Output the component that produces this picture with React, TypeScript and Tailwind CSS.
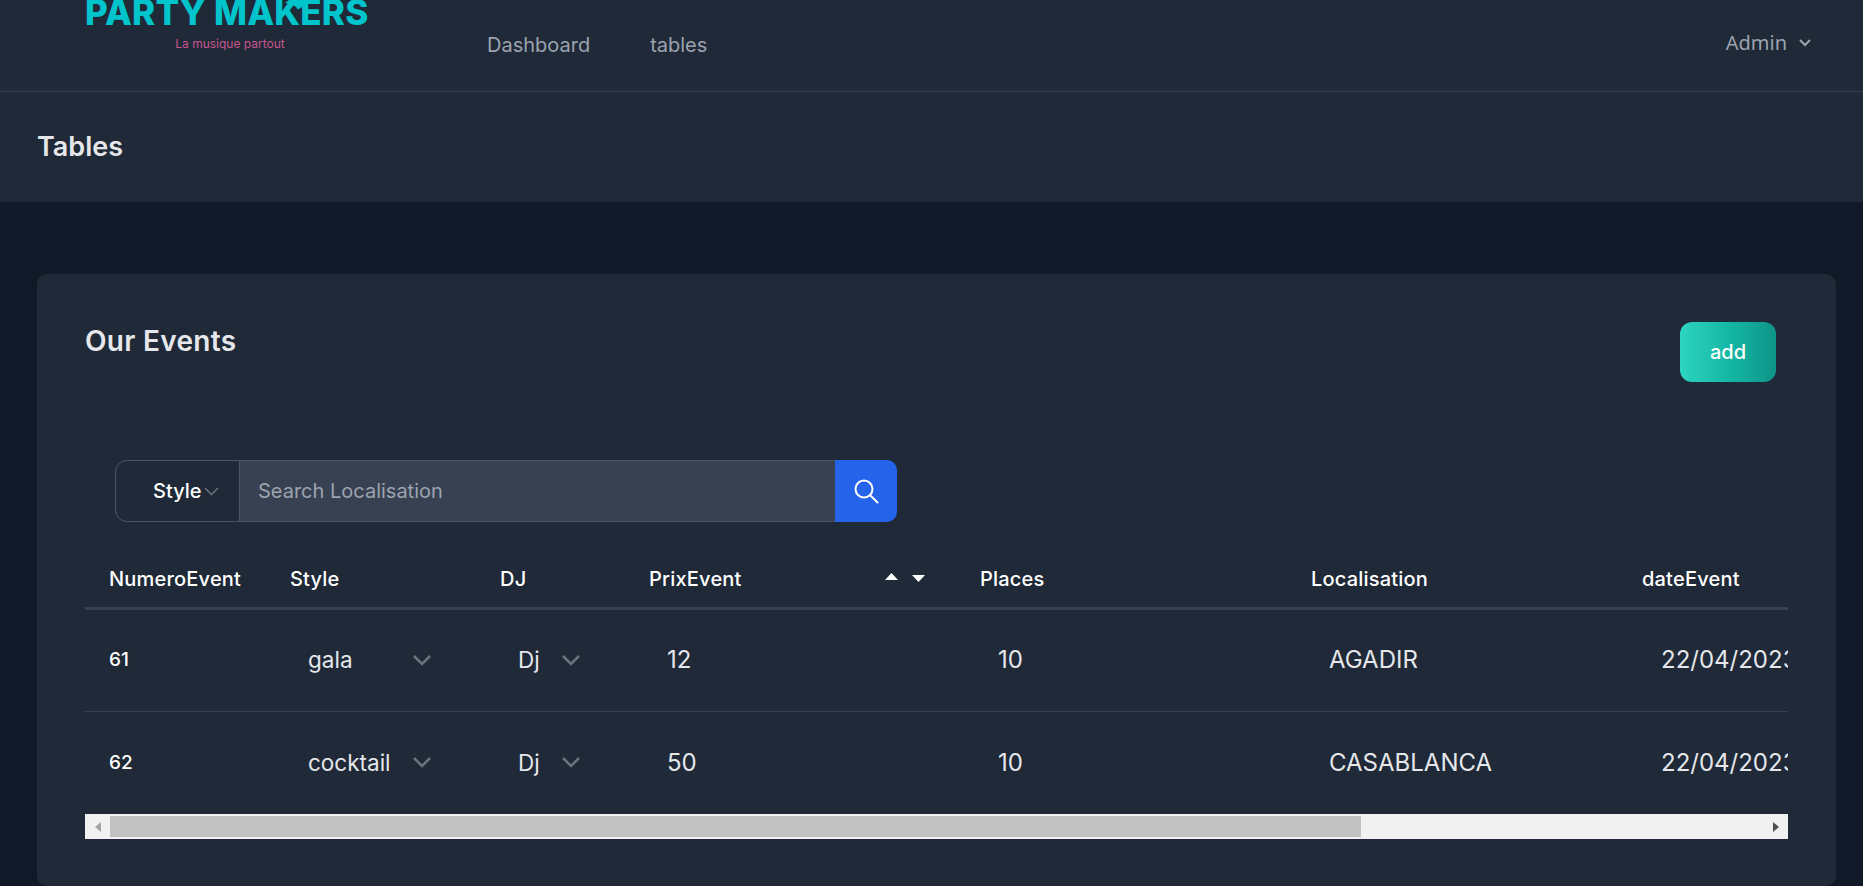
const rows = [
  { id: "61", style: "gala", prix: "12", places: "10", ville: "AGADIR", date: "22/04/2023" },
  { id: "62", style: "cocktail", prix: "50", places: "10", ville: "CASABLANCA", date: "22/04/2023" },
];

const CellChevron = () => (
  <svg width="18" height="11" viewBox="0 0 18 11" fill="none" stroke="#6b7280" strokeWidth="2.5">
    <path d="M1 1l8 8 8-8" />
  </svg>
);

const App = () => {
  return (
    <div className="h-[886px] overflow-hidden bg-[#111827] font-['Inter',sans-serif]">
      <header className="flex h-[92px] overflow-hidden border-b border-[#374151] bg-[#1f2937] pl-[85px] pr-[52px]">
        <div className="relative w-[282px] shrink-0">
          <div className="-mt-[10px] whitespace-nowrap text-[35px] leading-[44px] font-extrabold tracking-[0.2px] text-[#00c4cc]">
            PARTY MAKERS
          </div>
          <div className="mt-[2px] pl-[8px] text-center text-[12px] leading-[15px] text-[#c9558f]">La musique partout</div>
          <svg className="absolute left-[200px] top-0" width="21" height="10" viewBox="0 0 21 10" fill="#00c4cc">
            <path d="M4 0H20.500L19 5Q16 8 13 9.500L11 7Q8 4 0 3z" />
          </svg>
        </div>
        <nav className="ml-[120px] flex h-[90px] items-center gap-[60px] text-[20px] text-[#9ca3af]">
          <a>Dashboard</a>
          <a>tables</a>
        </nav>
        <div className="ml-auto flex h-[86px] items-center gap-[12px] font-['Noto_Sans',sans-serif] text-[20px] text-[#9ca3af]">
          <span>Admin</span>
          <svg width="12" height="8" viewBox="0 0 12 8" fill="none" stroke="#9ca3af" strokeWidth="2">
            <path d="M1 1l5 5 5-5" />
          </svg>
        </div>
      </header>

      <div className="flex h-[110px] items-center bg-[#1f2937] pl-[37px]">
        <h1 className="text-[27px] font-semibold text-[#e5e7eb]">Tables</h1>
      </div>

      <main className="pl-[37px] pr-[27px] pt-[72px]">
        <section className="h-[612px] rounded-[10px] bg-[#1f2937] px-[48px] pt-[48px]">
          <div className="flex items-start justify-between">
            <h2 className="mt-[3px] text-[28px] leading-[32px] font-semibold tracking-[0.3px] text-[#e5e7eb]">Our Events</h2>
            <button className="mr-[12px] h-[60px] w-[96px] rounded-[12px] bg-gradient-to-r from-[#2dd4bf] via-[#14b8a6] to-[#0d9488] text-[20px] font-medium text-white">
              add
            </button>
          </div>

          <div className="ml-[30px] mt-[78px] flex h-[62px] w-[782px]">
            <div className="flex w-[125px] items-center rounded-l-[12px] border border-[#4b5563] pl-[37px] text-[20px] font-medium text-white">
              Style
              <svg className="ml-[2px]" width="15" height="9" viewBox="0 0 15 9" fill="none" stroke="#6b7280" strokeWidth="1.5">
                <path d="M1 1l6.500 6.500L14 1" />
              </svg>
            </div>
            <input
              placeholder="Search Localisation"
              className="min-w-0 flex-1 border-y border-[#4b5563] bg-[#374151] pl-[18px] text-[20px] text-white outline-none placeholder:text-[#9ca3af]"
            />
            <button className="flex w-[62px] items-center justify-center rounded-r-[10px] bg-[#2563eb]">
              <svg width="26" height="26" viewBox="0 0 26 26" fill="none" stroke="white" strokeWidth="2" strokeLinecap="round">
                <circle cx="11" cy="11" r="8.500" />
                <path d="M17.500 17.500l7 7" />
              </svg>
            </button>
          </div>

          <div className="mt-[32px] w-[1703px] overflow-hidden">
            <table className="w-[2000px] table-fixed border-collapse text-left">
              <colgroup>
                <col className="w-[181px]" />
                <col className="w-[210px]" />
                <col className="w-[149px]" />
                <col className="w-[331px]" />
                <col className="w-[331px]" />
                <col className="w-[331px]" />
                <col />
              </colgroup>
              <thead>
                <tr className="h-[54px] border-b-[3px] border-[#374151] text-[20px] font-medium tracking-[0.2px] text-white">
                  <th className="pb-[3px] pl-[24px] font-medium">NumeroEvent</th>
                  <th className="pb-[3px] pl-[24px] font-medium">Style</th>
                  <th className="pb-[3px] pl-[24px] font-medium">DJ</th>
                  <th className="pb-[3px] pl-[24px] font-medium">
                    <div className="flex items-center justify-between pr-[31px]">
                      PrixEvent
                      <span className="flex gap-[14px] pb-[3px]">
                        <svg width="13" height="7" viewBox="0 0 13 7" fill="white"><path d="M6.500 0L13 7H0z" /></svg>
                        <svg className="mt-[2px]" width="13" height="7" viewBox="0 0 13 7" fill="white"><path d="M0 0h13L6.500 7z" /></svg>
                      </span>
                    </div>
                  </th>
                  <th className="pb-[3px] pl-[24px] font-medium">Places</th>
                  <th className="pb-[3px] pl-[24px] font-medium">Localisation</th>
                  <th className="pb-[3px] pl-[24px] font-medium">dateEvent</th>
                </tr>
              </thead>
              <tbody className="text-[24px] text-[#e5e7eb]">
                {rows.map((row, i) => (
                  <tr key={row.id} className={i === 0 ? "h-[103px] border-b border-[#374151]" : "h-[103px]"}>
                    <td className="pl-[24px] text-[19px] font-medium text-white">{row.id}</td>
                    <td className="pl-[42px] text-[22.5px]">
                      <div className="flex w-[123px] items-center justify-between">
                        {row.style}
                        <CellChevron />
                      </div>
                    </td>
                    <td className="pl-[42px] text-[22.5px]">
                      <div className="flex w-[62px] items-center justify-between">
                        Dj
                        <CellChevron />
                      </div>
                    </td>
                    <td className="pl-[42px]">{row.prix}</td>
                    <td className="pl-[42px]">{row.places}</td>
                    <td className="pl-[42px]">{row.ville}</td>
                    <td className="pl-[43px]">{row.date}</td>
                  </tr>
                ))}
              </tbody>
            </table>
          </div>

          <div className="flex h-[25px] w-[1703px] items-center bg-[#f1f1f1]">
            <div className="flex w-[25px] justify-center">
              <svg width="6" height="10" viewBox="0 0 6 10" fill="#a3a3a3"><path d="M6 0v10L0 5z" /></svg>
            </div>
            <div className="h-[21px] w-[1251px] bg-[#c1c1c1]" />
            <div className="ml-auto flex w-[25px] justify-center">
              <svg width="6" height="10" viewBox="0 0 6 10" fill="#505050"><path d="M0 0v10l6-5z" /></svg>
            </div>
          </div>
        </section>
      </main>
    </div>
  );
};

export default App;
